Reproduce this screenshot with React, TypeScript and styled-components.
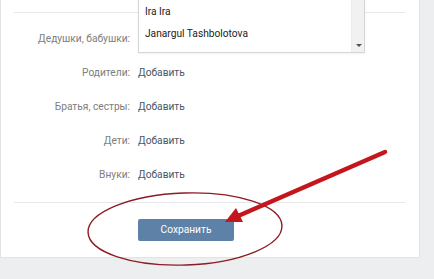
import React from "react";
import styled, { createGlobalStyle } from "styled-components";

const GlobalStyle = createGlobalStyle`
  html, body {
    margin: 0;
    padding: 0;
    background: #edeef0;
    font-family: Roboto, "Liberation Sans", Arial, sans-serif;
  }
`;

const Page = styled.div`
  position: relative;
  width: 434px;
  height: 279px;
  overflow: hidden;
  background: #edeef0;
`;

const Card = styled.div`
  position: relative;
  width: 420px;
  box-sizing: border-box;
  background: #fff;
  border: 1px solid #e1e3e6;
  border-top: none;
  padding: 12px 0 16px;
`;

const Divider = styled.div`
  height: 1px;
  margin: 0 14px 0 13px;
  background: #e7e8ec;
`;

const Rows = styled.div`
  padding: 8px 0 11px;
`;

const Row = styled.div`
  position: relative;
  display: grid;
  grid-template-columns: 129px 1fr;
  column-gap: 8px;
  align-items: center;
  height: 34px;
  font-size: 10.2px;
`;

const Label = styled.div`
  text-align: right;
  color: #7d7d7d;
`;

const Value = styled.div`
  color: #4b5663;
`;

const Dropdown = styled.div`
  position: absolute;
  left: 137px;
  top: -30px;
  width: 227px;
  box-sizing: border-box;
  padding: 9px 0 7px;
  background: #fff;
  border: 1px solid #d3d5d9;
  box-shadow: 0 1px 2px rgba(0, 0, 0, 0.06);
  z-index: 2;
`;

const Option = styled.div`
  height: 22px;
  line-height: 22px;
  padding-left: 6px;
  font-size: 10.2px;
  color: #222;
`;

const ScrollTrack = styled.div`
  position: absolute;
  top: 0;
  right: 0;
  bottom: 0;
  width: 12px;
  background: #f1f1f1;
  border-left: 1px solid #ececec;
`;

const ScrollArrow = styled.div`
  position: absolute;
  bottom: 5px;
  left: 4px;
  width: 0;
  height: 0;
  border-left: 3px solid transparent;
  border-right: 3px solid transparent;
  border-top: 3px solid #505050;
`;

const Footer = styled.div`
  padding: 15px 0 0 137px;
`;

const SaveButton = styled.button`
  width: 96px;
  height: 22px;
  border: none;
  border-radius: 2px;
  background: #5e81a8;
  color: #fff;
  font-family: Roboto, "Liberation Sans", Arial, sans-serif;
  font-size: 10.2px;
  padding: 0;
`;

const Annotation = styled.svg`
  position: absolute;
  left: 0;
  top: 0;
  pointer-events: none;
`;

const rows = [
  { label: "Родители:" },
  { label: "Братья, сестры:" },
  { label: "Дети:" },
  { label: "Внуки:" },
];

export default function App() {
  return (
    <Page>
      <GlobalStyle />
      <Card>
        <Divider />
        <Rows>
          <Row>
            <Label>Дедушки, бабушки:</Label>
            <Value />
            <Dropdown>
              <Option>Ira Ira</Option>
              <Option>Janargul Tashbolotova</Option>
              <ScrollTrack>
                <ScrollArrow />
              </ScrollTrack>
            </Dropdown>
          </Row>
          {rows.map((r) => (
            <Row key={r.label}>
              <Label>{r.label}</Label>
              <Value>Добавить</Value>
            </Row>
          ))}
        </Rows>
        <Divider />
        <Footer>
          <SaveButton type="button">Сохранить</SaveButton>
        </Footer>
      </Card>
      <Annotation width="434" height="279" viewBox="0 0 434 279">
        <ellipse
          cx="185"
          cy="229"
          rx="97"
          ry="36"
          fill="none"
          stroke="#8d1b24"
          strokeWidth="1.4"
          transform="rotate(-2 185 229)"
        />
        <line x1="385" y1="152" x2="238" y2="216" stroke="#c4161c" strokeWidth="4.5" strokeLinecap="round" />
        <polygon points="225,222 243,222 236,208" fill="#c4161c" />
      </Annotation>
    </Page>
  );
}
